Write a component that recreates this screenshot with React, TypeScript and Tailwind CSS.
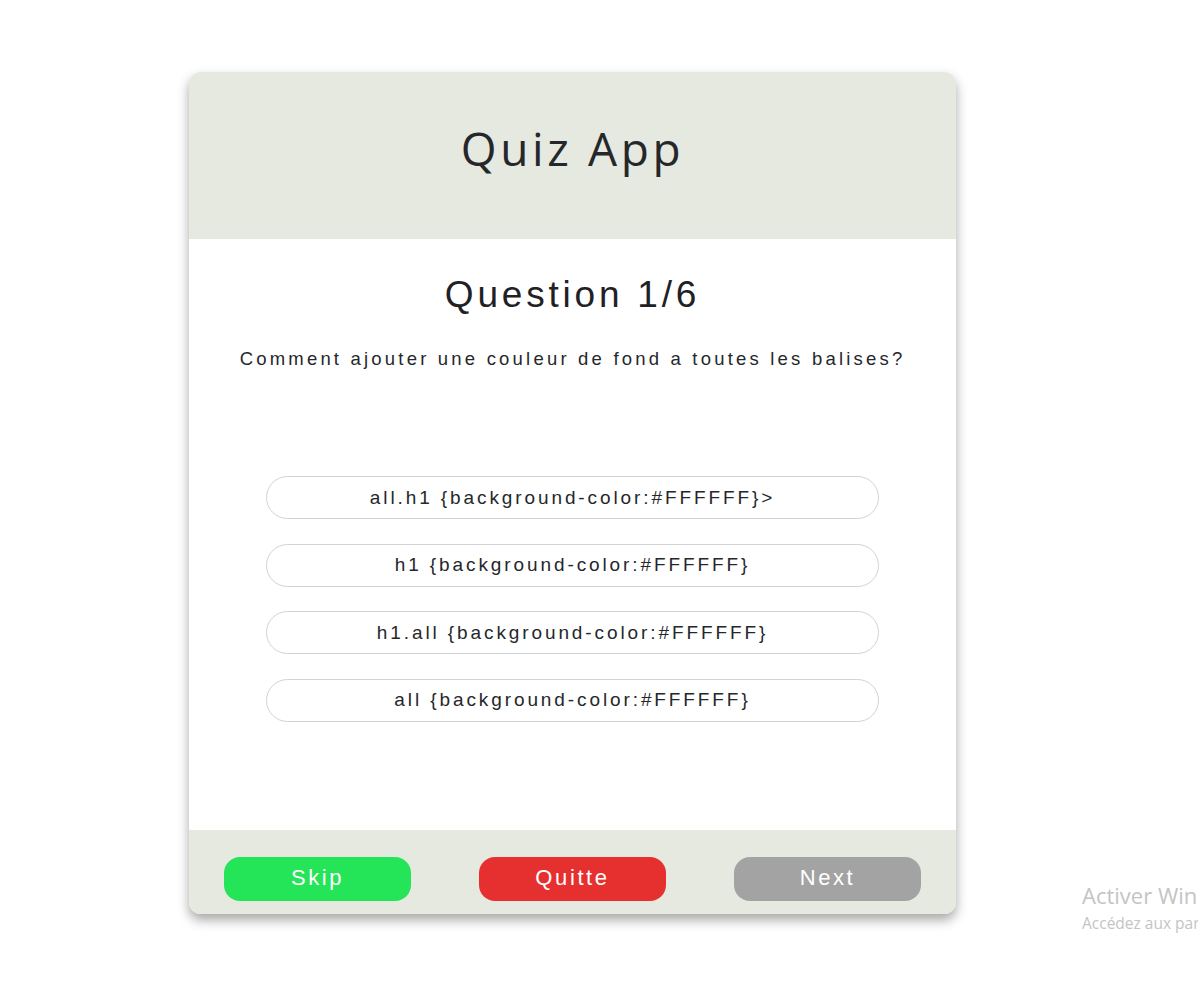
import React from 'react'

const options = [
  'all.h1 {background-color:#FFFFFF}>',
  'h1 {background-color:#FFFFFF}',
  'h1.all {background-color:#FFFFFF}',
  'all {background-color:#FFFFFF}',
]

const App = () => {
  return (
    <div className="relative min-h-[987px] w-full overflow-hidden bg-white pt-[72px] font-['Liberation_Sans',Arial,sans-serif]">
      <div className="ml-[189px] w-[767px] overflow-hidden rounded-xl bg-white shadow-[0_6px_12px_rgba(0,0,0,0.35)]">
        <header className="flex h-[167px] items-center justify-center bg-[#e6e9e0] pb-[14px]">
          <h1 className="font-['Open_Sans',sans-serif] text-[46px] tracking-[3.6px] text-[#25272b]">Quiz App</h1>
        </header>

        <main className="flex h-[591px] flex-col items-center pt-[28px]">
          <h2 className="text-[37px] tracking-[3.8px] text-[#1f2125]">Question 1/6</h2>
          <p className="mt-[22px] text-[18.5px] tracking-[3.2px] text-[#25272b]">
            Comment ajouter une couleur de fond a toutes les balises?
          </p>

          <div className="mt-[104px] flex flex-col gap-[24.5px]">
            {options.map((opt) => (
              <button
                key={opt}
                className="h-[43px] w-[613px] rounded-full border border-[#d0d3d4] bg-white text-[19px] tracking-[2.9px] text-[#25272b]"
              >
                {opt}
              </button>
            ))}
          </div>
        </main>

        <footer className="flex h-[84px] items-start justify-between bg-[#e6e9e0] px-[35px] pt-[27px]">
          <button className="h-[44px] w-[187px] rounded-2xl bg-[#24e458] pb-[3px] text-[22px] tracking-[2.6px] text-white">Skip</button>
          <button className="h-[44px] w-[187px] rounded-2xl bg-[#e63030] pb-[3px] text-[22px] tracking-[2.6px] text-white">Quitte</button>
          <button className="h-[44px] w-[187px] rounded-2xl bg-[#a3a3a3] pb-[3px] text-[22px] tracking-[2.6px] text-white">Next</button>
        </footer>
      </div>

      <div className="absolute left-[1082px] top-[880px] whitespace-nowrap font-['Open_Sans',sans-serif] text-[#c4c4c4]">
        <div className="text-[22px] leading-[30px]">Activer Windows</div>
        <div className="text-[15.5px] leading-[26px]">Accédez aux paramètres</div>
      </div>
    </div>
  )
}

export default App
